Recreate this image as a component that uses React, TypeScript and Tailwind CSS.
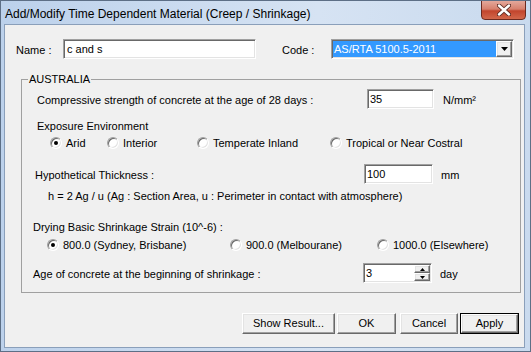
import React from 'react';

// classic sunken edit box
function Sunken({ className = '', children }: { className?: string; children?: React.ReactNode }) {
  return (
    <div
      className={`relative flex items-center bg-white border border-t-[#a0a0a0] border-l-[#a0a0a0] border-r-white border-b-white shadow-[inset_1px_1px_0_#696969,inset_-1px_-1px_0_#e3e3e3] ${className}`}
    >
      {children}
    </div>
  );
}

function Radio({ checked = false, label, className = '' }: { checked?: boolean; label: string; className?: string }) {
  return (
    <div className={`flex items-center ${className}`}>
      <span className="w-[12px] h-[12px] flex-shrink-0 rounded-full bg-white border border-t-[#a0a0a0] border-l-[#a0a0a0] border-r-white border-b-white shadow-[inset_1px_1px_0_#696969,inset_-1px_-1px_0_#e3e3e3] flex items-center justify-center">
        {checked && <span className="w-[4px] h-[4px] rounded-full bg-black" />}
      </span>
      <span className="ml-[4px] whitespace-nowrap">{label}</span>
    </div>
  );
}

function Raised({ className = '', children }: { className?: string; children?: React.ReactNode }) {
  return (
    <div
      className={`flex items-center justify-center bg-[#f0f0f0] border border-t-white border-l-white border-r-[#696969] border-b-[#696969] shadow-[inset_-1px_-1px_0_#a0a0a0,inset_1px_1px_0_#e3e3e3] ${className}`}
    >
      {children}
    </div>
  );
}

function Button({ label, className = '', isDefault = false }: { label: string; className?: string; isDefault?: boolean }) {
  return (
    <div className={`h-[21px] ${isDefault ? 'border border-black' : ''} ${className}`}>
      <Raised className="h-full w-full">{label}</Raised>
    </div>
  );
}

function Arrow({ up = false, w = 7, h = 4 }: { up?: boolean; w?: number; h?: number }) {
  return (
    <svg width={w} height={h} viewBox={`0 0 ${w} ${h}`}>
      {up ? (
        <polygon points={`0,${h} ${w},${h} ${w / 2},0`} fill="#000" />
      ) : (
        <polygon points={`0,0 ${w},0 ${w / 2},${h}`} fill="#000" />
      )}
    </svg>
  );
}

export default function App() {
  return (
    <div className="w-[531px] h-[352px] overflow-hidden border border-[#5d6f86] bg-[linear-gradient(to_right,#bcd1eb,#d6e3f3_60%,#c9daee)] font-['Liberation_Sans',Arial,sans-serif] text-[11px] text-black">
      {/* ── TITLE BAR ───────────────────────────── */}
      <div className="h-[23px] flex justify-between">
        <div className="pl-[4px] pt-[3px] text-[12px] leading-[20px] whitespace-nowrap">
          Add/Modify Time Dependent Material (Creep / Shrinkage)
        </div>
        <div className="mr-[4px] w-[45px] h-[20px] -mt-[1px] rounded-b-[4px] border border-[#6b2a20] bg-[linear-gradient(to_bottom,#e4a89b_0%,#d7806d_45%,#c2452d_55%,#d2674b_100%)] flex items-center justify-center">
          <svg width="14" height="12" viewBox="0 0 14 12">
            <path d="M2 1.5 L12 10.5 M12 1.5 L2 10.5" stroke="#5a2a22" strokeWidth="4.2" strokeLinecap="round" />
            <path d="M2 1.5 L12 10.5 M12 1.5 L2 10.5" stroke="#fff" strokeWidth="2.4" strokeLinecap="round" />
          </svg>
        </div>
      </div>

      {/* ── CLIENT AREA ─────────────────────────── */}
      <div className="ml-[3px] w-[521px] h-[324px] border border-[#8a9fba] bg-[#f0f0f0]">
        {/* Name / Code */}
        <div className="mt-[14px] h-[20px] flex items-center">
          <span className="ml-[11px] w-[47px] pt-[2px]">Name :</span>
          <Sunken className="w-[193px] h-[20px]">
            <span className="pl-[3px]">c and s</span>
          </Sunken>
          <span className="ml-[26px] w-[49px] pt-[2px]">Code :</span>
          <Sunken className="w-[183px] h-[20px]">
            <div className="ml-[1px] w-[163px] h-[16px] bg-[#3399ff] text-white flex items-center pl-[1px] leading-[14px]">
              AS/RTA 5100.5-2011
            </div>
            <Raised className="w-[16px] h-[16px]">
              <Arrow />
            </Raised>
          </Sunken>
        </div>

        {/* ── AUSTRALIA GROUP ────────────────────── */}
        <fieldset className="mt-[13px] ml-[16px] w-[500px] h-[221px] border border-[#a0a0a0]">
          <legend className="ml-[6px] px-[1px] leading-[14px]">AUSTRALIA</legend>

          <div className="mt-[3px] h-[20px] flex items-center">
            <span className="ml-[15px] w-[330px] pt-[2px] whitespace-nowrap">
              Compressive strength of concrete at the age of 28 days :
            </span>
            <Sunken className="w-[67px] h-[20px]">
              <span className="pl-[2px]">35</span>
            </Sunken>
            <span className="ml-[9px] pt-[2px]">N/mm²</span>
          </div>

          <div className="mt-[10px] h-[14px] leading-[14px] ml-[15px]">Exposure Environment</div>

          <div className="mt-[3px] h-[14px] leading-[14px] flex items-center">
            <Radio checked label="Arid" className="ml-[28px] w-[57px]" />
            <Radio label="Interior" className="w-[90px]" />
            <Radio label="Temperate Inland" className="w-[133px]" />
            <Radio label="Tropical or Near Costral" />
          </div>

          <div className="mt-[14px] h-[20px] flex items-center">
            <span className="ml-[13px] w-[329px] pt-[3px]">Hypothetical Thickness :</span>
            <Sunken className="w-[69px] h-[20px]">
              <span className="pl-[2px]">100</span>
            </Sunken>
            <span className="ml-[8px] pt-[3px]">mm</span>
          </div>

          <div className="mt-[5px] h-[14px] leading-[14px] ml-[26px] whitespace-nowrap">
            h = 2 Ag / u (Ag : Section Area, u : Perimeter in contact with atmosphere)
          </div>

          <div className="mt-[17px] h-[14px] leading-[14px] ml-[11px]">Drying Basic Shrinkage Strain (10^-6) :</div>

          <div className="mt-[4px] h-[14px] leading-[14px] flex items-center">
            <Radio checked label="800.0 (Sydney, Brisbane)" className="ml-[25px] w-[183px]" />
            <Radio label="900.0 (Melbourane)" className="w-[147px]" />
            <Radio label="1000.0 (Elsewhere)" />
          </div>

          <div className="mt-[11px] h-[20px] flex items-center">
            <span className="ml-[11px] w-[330px] pt-[2px] whitespace-nowrap">
              Age of concrete at the beginning of shrinkage :
            </span>
            <Sunken className="w-[69px] h-[20px] justify-between">
              <span className="pl-[2px]">3</span>
              <div className="mr-[1px] flex flex-col">
                <Raised className="w-[16px] h-[8px]">
                  <Arrow up w={5} h={3} />
                </Raised>
                <Raised className="w-[16px] h-[8px]">
                  <Arrow w={5} h={3} />
                </Raised>
              </div>
            </Sunken>
            <span className="ml-[8px] pt-[2px]">day</span>
          </div>
        </fieldset>

        {/* ── BUTTONS ───────────────────────────── */}
        <div className="mt-[20px] flex">
          <Button label="Show Result..." className="ml-[237px] w-[93px]" />
          <Button label="OK" className="ml-[2px] w-[59px]" />
          <Button label="Cancel" className="ml-[4px] w-[58px]" />
          <Button label="Apply" isDefault className="ml-[2px] w-[59px]" />
        </div>
      </div>
    </div>
  );
}
